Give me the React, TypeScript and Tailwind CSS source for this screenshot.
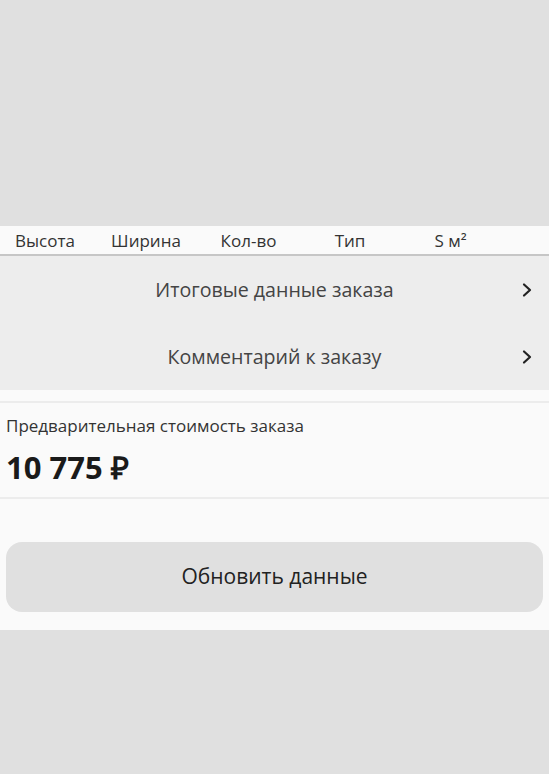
import React from "react";

const columns = ["Высота", "Ширина", "Кол-во", "Тип", "S м²"];

const Chevron = () => (
  <svg width="14" height="16" viewBox="0 0 14 16" fill="none" className="text-[#222]">
    <path d="M4 2.5L10 8L4 13.5" stroke="currentColor" strokeWidth="2.2" strokeLinecap="round" strokeLinejoin="round" />
  </svg>
);

const LinkRow = ({ title }: { title: string }) => (
  <div className="relative h-[67px] flex items-center justify-center">
    <span className="text-[19.6px] text-[#444]">{title}</span>
    <div className="absolute right-[15px] top-1/2 -translate-y-1/2 flex">
      <Chevron />
    </div>
  </div>
);

export default function App() {
  return (
    <div className="min-h-[774px] bg-[#e0e0e0] font-['Open_Sans',sans-serif]">
      <div className="h-[226px]" />

      {/* table header */}
      <div className="h-[30px] bg-[#fafafa] border-b-2 border-[#c6c6c6] grid grid-cols-[90px_112px_93px_110px_91px] items-center text-[17px] text-[#333]">
        {columns.map((c) => (
          <span key={c} className="text-center leading-none">{c}</span>
        ))}
      </div>

      <div className="bg-[#ededed]">
        <LinkRow title="Итоговые данные заказа" />
        <LinkRow title="Комментарий к заказу" />
      </div>

      <div className="bg-[#fafafa]">
        <div className="h-[11px]" />
        <div className="border-y-2 border-[#ececec] h-[98px] px-[6px] flex flex-col">
          <span className="mt-[12px] text-[17px] text-[#333] leading-[22px]">Предварительная стоимость заказа</span>
          <span className="mt-[12px] text-[31px] font-bold text-[#1a1a1a] leading-[36px]">10 775 ₽</span>
        </div>
        <div className="px-[6px] pt-[43px] pb-[18px]">
          <button className="w-full h-[70px] rounded-[16px] bg-[#e0e0e0] text-[21px] font-medium text-[#222]">
            Обновить данные
          </button>
        </div>
      </div>
    </div>
  );
}
